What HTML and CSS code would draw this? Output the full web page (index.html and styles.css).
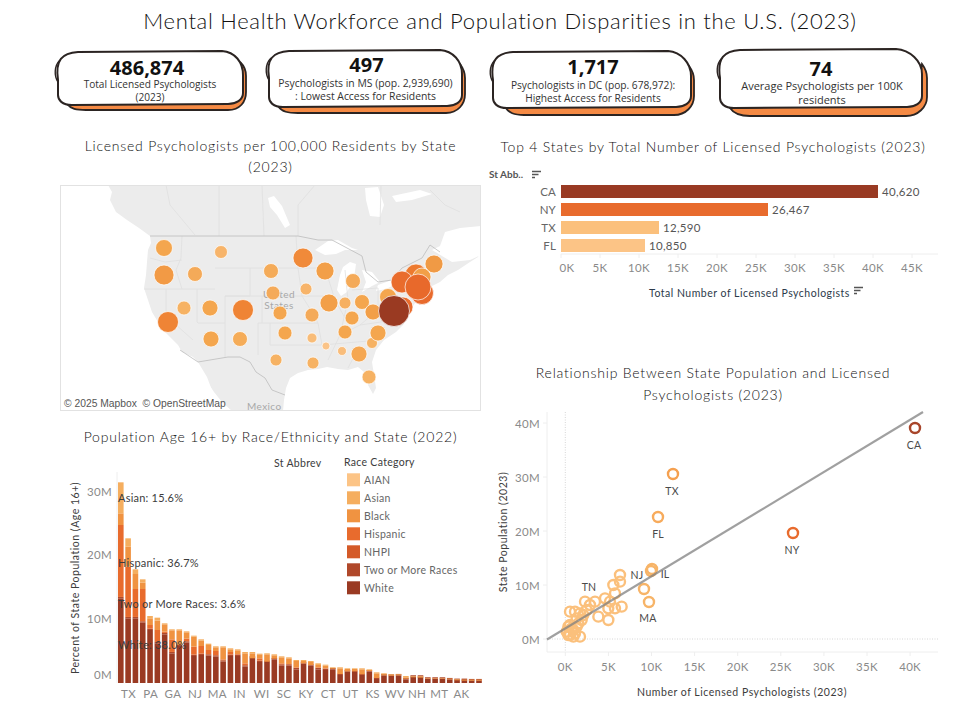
FILE: index.html
```html
<!DOCTYPE html>
<html lang="en">
<head>
<meta charset="utf-8">
<title>Mental Health Workforce and Population Disparities in the U.S. (2023)</title>
<link rel="stylesheet" href="styles.css">
</head>
<body>
<div class="page">
  <h1 class="title">Mental Health Workforce and Population Disparities in the U.S. (2023)</h1>

  <div class="kpis">
    <div class="kpi kpi-a">
      <svg class="kpi-shape" viewBox="55 48 192 72">
        <path class="kpi-back" d="M67 104C71 109 76 110 86 110L228 110C240 110 246 102 246 92L246 76C246 70 244 66 241 63L236 100Z"/>
        <path class="kpi-front" d="M58 80C55 60 62 53 78 52L222 51C235 52 243 62 243 75L243 93C243 100 236 104 228 104L72 105C62 105 58 100 58 95Z"/>
        <path class="kpi-tail" d="M58 82C54 76 54 66 60 60"/>
      </svg>
      <div class="kpi-num">486,874</div>
      <div class="kpi-sub">Total Licensed Psychologists<br>(2023)</div>
    </div>
    <div class="kpi kpi-b">
      <svg class="kpi-shape" viewBox="267 48 199 72">
        <path class="kpi-back" d="M278 106C282 112 288 113 298 113L446 113C458 113 465 104 465 94L465 78C465 72 463 68 460 64L455 102Z"/>
        <path class="kpi-front" d="M269 78C266 59 273 52 289 51L440 50C453 51 462 61 462 74L462 95C462 102 455 106 447 106L283 107C273 107 269 102 269 97Z"/>
        <path class="kpi-tail" d="M269 80C265 74 265 64 271 58"/>
      </svg>
      <div class="kpi-num">497</div>
      <div class="kpi-sub">Psychologists in MS (pop. 2,939,690)<br>: Lowest Access for Residents</div>
    </div>
    <div class="kpi kpi-c">
      <svg class="kpi-shape" viewBox="491 48 204 72">
        <path class="kpi-back" d="M505 107C509 113 514 115 524 115L674 115C686 115 694 106 694 96L694 80C694 74 692 70 689 66L684 104Z"/>
        <path class="kpi-front" d="M493 80C490 60 497 53 513 52L668 51C681 52 691 63 691 76L691 96C691 103 684 107 676 107L507 108C497 108 493 103 493 98Z"/>
        <path class="kpi-tail" d="M493 82C489 76 489 66 495 60"/>
      </svg>
      <div class="kpi-num">1,717</div>
      <div class="kpi-sub">Psychologists in DC (pop. 678,972):<br>Highest Access for Residents</div>
    </div>
    <div class="kpi kpi-d">
      <svg class="kpi-shape" viewBox="718 48 210 72">
        <path class="kpi-back" d="M730 108C734 114 740 116 750 116L906 116C918 116 927 107 927 97L927 78C927 72 925 68 922 64L917 104Z"/>
        <path class="kpi-front" d="M720 78C717 58 724 51 740 50L896 49C910 50 922 61 922 74L922 96C922 103 915 107 907 107L734 108C724 108 720 103 720 98Z"/>
        <path class="kpi-tail" d="M720 80C716 74 716 64 722 58"/>
      </svg>
      <div class="kpi-num">74</div>
      <div class="kpi-sub">Average Psychologists per 100K<br>residents</div>
    </div>
  </div>

  <div class="board">
    <section class="col col-left">
      <h2 class="chart-title title-map">Licensed Psychologists per 100,000 Residents by State<br>(2023)</h2>
      <svg class="chart map" id="map" viewBox="60 185 421 226">
        <rect class="water" x="60" y="185" width="421" height="226"/>
        <path class="land" d="M108 185L112 192 110 200 116 212 127 220 139 228 150 236 151 243 148 250 147 262 146 275 144 288 148 300 152 312 158 322 165 332 178 345 182 352 193 357 196 368 206 380 214 392 222 402 232 411 283 411 284 400 286 388 290 378 298 373 308 370 318 369 327 367 338 369 348 370 358 367 364 372 368 385 373 394 376 388 374 375 372 362 376 350 384 340 396 332 403 325 408 315 412 308 418 298 428 288 440 282 448 275 458 270 470 262 478 257 481 250 481 185Z"/>
        <path class="water" d="M193 357L198 362 207 377 213 393 217 398 210 393 203 383 195 370Z"/>
        <path class="water" d="M432 250L440 246 445 232 460 228 481 226 481 255 470 260 452 262Z"/>
        <path class="water" d="M315 250L328 241 338 240 352 248 358 250 345 250 336 254 325 255Z"/>
        <path class="water" d="M337 290L340 275 343 267 350 262 356 264 354 278 347 292 341 296Z"/>
        <path class="water" d="M362 270L372 272 380 282 372 286 362 292 366 282Z"/>
        <path class="water" d="M378 285L392 280 398 283 386 289 376 291Z"/>
        <path class="water" d="M365 188L378 187 384 205 380 217 370 216 366 200Z"/>
        <path class="water" d="M268 198L274 196 282 206 290 225 285 228 277 215 270 207Z"/>
        <path class="water" d="M392 196L420 190 432 194 412 200 396 202Z"/>
        <path class="water" d="M94 190L104 188 108 200 102 204Z"/>
        <path class="state" d="M150 258L165 262 182 260M182 236L181 258 176 270 182 289M144 289L215 289M166 289L166 316 193 340M197 289L197 322 198 323 225 323M215 268L250 268 250 296 225 296 225 323 225 357M225 296L262 296 262 323 258 323 258 355M250 268L296 268M262 296L312 296M262 323L318 323M296 236L298 268 302 296 312 312 318 323 322 345M270 323L270 345 290 345 322 345M296 268L325 268 335 300 345 318M312 296L335 296M345 270L348 300 340 335 328 360M352 290L378 288 378 310 360 325 340 335M360 325L395 320M322 345L380 340M360 345L348 368M378 310L400 305"/>
        <path class="state" d="M166 185L170 205 195 235M219 185L219 236M262 185L264 236M298 236L298 205 315 185M380 225L381 185M430 190L445 205 460 212"/>
        <path class="border" d="M150 236L298 236 318 240 332 240 362 256 366 272 378 282 392 280 402 268 422 258 430 245 440 252M180 350L198 362 228 357 240 357 250 362 256 372 265 378 272 390 285 395"/>
        <text class="map-place" x="279" y="298" text-anchor="middle">United</text>
        <text class="map-place" x="279" y="309" text-anchor="middle">States</text>
        <g id="map-dots"></g>
        <text class="map-place" x="247" y="410">Mexico</text>
        <text class="map-credit" x="64" y="407">© 2025 Mapbox  © OpenStreetMap</text>
      </svg>

      <h2 class="chart-title title-stack">Population Age 16+ by Race/Ethnicity and State (2022)</h2>
      <svg class="chart stack" id="stack" viewBox="60 447 424 257">
        <line class="axis" x1="117" y1="472" x2="117" y2="683"/>
        <g id="stack-bars"></g>
        <text class="axis-title axis-long" transform="translate(79 578) rotate(-90)" text-anchor="middle">Percent of State Population (Age 16+)</text>
        <text class="tick" x="112" y="496" text-anchor="end">30M</text>
        <text class="tick" x="112" y="559" text-anchor="end">20M</text>
        <text class="tick" x="112" y="623" text-anchor="end">10M</text>
        <text class="tick" x="112" y="679" text-anchor="end">0M</text>
        <text class="note" x="118" y="502">Asian: 15.6%</text>
        <text class="note" x="118" y="567">Hispanic: 36.7%</text>
        <text class="note" x="118" y="608">Two or More Races: 3.6%</text>
        <text class="note" x="118" y="649">White: 38.0%</text>
        <text class="axis-title" x="274" y="467">St Abbrev</text>
        <text class="axis-title" x="344" y="466">Race Category</text>
        <g id="legend"></g>
      </svg>
    </section>

    <section class="col col-right">
      <h2 class="chart-title title-top">Top 4 States by Total Number of Licensed Psychologists (2023)</h2>
      <svg class="chart bars" id="bars" viewBox="488 158 452 147">
        <text class="field" x="489" y="178">St Abb..</text>
        <path class="sort" d="M532 171.5H541M532 174.5H538.5M532 177.5H535"/>
        <line class="axis" x1="561" y1="254" x2="938" y2="254"/>
        <line class="axis" x1="561" y1="254" x2="561" y2="258"/>
        <g id="bar-rows"></g>
        <text class="field-title" x="649" y="297">Total Number of Licensed Psychologists</text>
        <path class="sort" d="M854 287.5H863M854 290.5H860.5M854 293.5H857"/>
      </svg>

      <h2 class="chart-title title-scatter">Relationship Between State Population and Licensed<br>Psychologists (2023)</h2>
      <svg class="chart scatter" id="scatter" viewBox="488 406 452 298">
        <line class="axis" x1="547" y1="412" x2="547" y2="652"/>
        <line class="axis" x1="547" y1="652" x2="938" y2="652"/>
        <line class="zero" x1="565.3" y1="412" x2="565.3" y2="652"/>
        <line class="zero" x1="547" y1="639" x2="938" y2="639"/>
        <g id="scatter-ticks"></g>
        <g id="scatter-dots"></g>
        <line class="trend" x1="547" y1="639.5" x2="923" y2="412"/>
        <text class="axis-title axis-long" transform="translate(507 532) rotate(-90)" text-anchor="middle">State Population (2023)</text>
        <text class="axis-title axis-long" x="742" y="696" text-anchor="middle">Number of Licensed Psychologists (2023)</text>
      </svg>
    </section>
  </div>
</div>
<script src="charts.js"></script>
</body>
</html>
```

FILE: styles.css
```css
* { box-sizing: border-box; }
html, body { margin: 0; padding: 0; background: #fff; }
body { font-family: "Lato", "Open Sans", sans-serif; color: #333; }
.page { width: 968px; height: 704px; overflow: hidden; display: flex; flex-direction: column; }

.title {
  margin: 7px 0 0 32px;
  height: 28px;
  line-height: 27px;
  font-size: 22px;
  font-weight: 300;
  text-align: center;
  letter-spacing: 0.7px;
  color: #111;
}

.kpis { display: flex; margin-top: 13px; height: 72px; padding-left: 55px; }
.kpi { position: relative; text-align: center; font-family: "Open Sans", sans-serif; }
.kpi-shape { position: absolute; left: 0; top: 0; width: 100%; height: 100%; overflow: visible; }
.kpi-front { fill: #fff; stroke: #2b2422; stroke-width: 2; }
.kpi-back { fill: #f58a44; stroke: #2b2422; stroke-width: 1.8; }
.kpi-tail { fill: none; stroke: #2b2422; stroke-width: 1.4; }
.kpi-num, .kpi-sub { position: relative; }
.kpi-num { font-size: 20px; font-weight: 700; line-height: 22px; color: #111; }
.kpi-sub { font-size: 10.2px; line-height: 13px; color: #333; }
.kpi-a { width: 192px; padding-top: 10px; }
.kpi-a .kpi-num { left: -4px; line-height: 20px; }
.kpi-a .kpi-sub { left: -1px; font-size: 10.1px; }
.kpi-b { width: 199px; margin-left: 20px; padding-top: 6px; }
.kpi-b .kpi-sub { margin-top: 1px; left: -1px; font-size: 10.4px; }
.kpi-c { width: 204px; margin-left: 25px; padding-top: 8px; }
.kpi-c .kpi-sub { margin-top: 1px; }
.kpi-d { width: 210px; margin-left: 23px; padding-top: 13px; }
.kpi-d .kpi-num { line-height: 16px; left: -2px; }
.kpi-d .kpi-sub { margin-top: 2px; left: -1px; font-size: 11px; line-height: 14px; }

.board { display: flex; margin-top: 15px; flex: 1; min-height: 0; }
.col { display: flex; flex-direction: column; }
.col-left { width: 424px; margin-left: 60px; }
.col-right { width: 452px; margin-left: 4px; }
.chart { display: block; flex: none; }
.chart-title {
  margin: 0;
  font-size: 14px;
  font-weight: 300;
  line-height: 21px;
  text-align: center;
  letter-spacing: 0.78px;
  color: #111;
}
.title-map { width: 421px; }
.map { width: 421px; height: 226px; margin-top: 8px; outline: 1px solid #e2e2e2; outline-offset: -1px; }
.title-stack { width: 421px; margin-top: 15px; }
.stack { width: 424px; height: 257px; }
.title-top { margin-top: 1px; width: 450px; }
.bars { width: 452px; height: 147px; margin-top: 1px; }
.title-scatter { margin-top: 57px; line-height: 22px; width: 450px; }
.scatter { width: 452px; height: 298px; }

.land { fill: #ececec; }
.water { fill: #fff; }
.state { fill: none; stroke: #e0e0e0; stroke-width: 0.8; }
.border { fill: none; stroke: #bcbcbc; stroke-width: 0.8; }
.map-place { font-size: 10px; fill: #a8a8a8; letter-spacing: 0.4px; }
.map-credit { font-size: 10.3px; fill: #555; white-space: pre; font-family: "Liberation Sans", sans-serif; }

.axis { stroke: #eee; stroke-width: 1; }
.zero { stroke: #d6d6d6; stroke-width: 1; stroke-dasharray: 1 1.5; }
.tick { font-size: 11.5px; fill: #8a8a8a; letter-spacing: 0.3px; }
.state-tick { font-size: 11.5px; fill: #666; letter-spacing: 0.2px; }
.value { font-size: 11.5px; fill: #555; letter-spacing: 0.3px; }
.note { font-size: 11px; fill: #3c3c3c; letter-spacing: 0.22px; }
.axis-title { font-size: 10.5px; fill: #3c3c3c; letter-spacing: 0.3px; }
.axis-long { letter-spacing: 0.52px; }
.field { font-size: 10px; font-weight: 700; fill: #555; }
.field-title { font-size: 10.5px; fill: #2c3a4a; letter-spacing: 0.5px; }
.legend-label { font-size: 10.5px; fill: #666; letter-spacing: 0.3px; }
.sort { fill: none; stroke: #555; stroke-width: 1.4; }
.point-label { font-size: 10.5px; fill: #4a4a4a; letter-spacing: 0.2px; }
.dot { stroke: #fff; stroke-width: 1; stroke-opacity: 0.7; }
.ring { fill: none; stroke-width: 2.4; }
.trend { stroke: #808080; stroke-width: 2.2; stroke-opacity: 0.75; }
```

FILE: charts.js
```js
var NS = "http://www.w3.org/2000/svg";
function add(parent, tag, attrs, text) {
  var el = document.createElementNS(NS, tag);
  for (var k in attrs) el.setAttribute(k, attrs[k]);
  if (text !== undefined) el.textContent = text;
  parent.appendChild(el);
  return el;
}

/* map dots: x, y, r, colour */
var dots = [
  [164,248,8.5,"#f4a64e"],[221,252,6.5,"#f7b46a"],[164,275,10,"#f29a45"],[195,274,7.5,"#f4aa59"],
  [184,308,7,"#f6b263"],[210,308,8,"#f4a64e"],[243,310,10.5,"#ef8435"],[168,322,10.5,"#ef8435"],
  [211,339,8,"#f4a64e"],[240,339,7.5,"#f5ac58"],[271,271,7.5,"#f4ab59"],[273,293,7,"#f4aa59"],
  [280,313,7,"#f4a64e"],[285,333,7,"#f4a64e"],[276,360,6,"#f6b263"],[303,258,10,"#f08a3a"],
  [325,271,9,"#f29f48"],[306,289,6,"#f7b46a"],[329,303,9,"#f29f48"],[312,315,7,"#f4aa59"],
  [312,338,5,"#f8bc78"],[313,363,6,"#f6b263"],[326,346,4,"#fbc488"],[342,351,4.5,"#f9bd7b"],
  [359,354,8,"#f5a752"],[369,377,7,"#f6b263"],[345,332,7,"#f4a64e"],[352,318,7,"#f4a64e"],
  [345,303,6,"#f6b061"],[353,281,7.5,"#f4aa59"],[362,302,7.5,"#f4a64e"],[372,343,5.5,"#f6b263"],
  [378,333,8,"#f4a64e"],[373,312,8,"#f29f48"],[388,297,8.5,"#f4a64e"],[403,307,10,"#e96c2d"],
  [434,264,9,"#f09a45"],[416,275,11,"#ed7a2f"],[422,277,9,"#f29f48"],[402,282,11,"#e96c2d"],
  [422,293,11.5,"#e86a2c"],[418,287,13,"#e8692b"],[394,311,15.5,"#9a3a22"]
];
var mapDots = document.getElementById("map-dots");
dots.forEach(function (d) {
  add(mapDots, "circle", { "class": "dot", cx: d[0], cy: d[1], r: d[2], fill: d[3] });
});

/* stacked bars: y of the top of each race group, read in 3x pixels above the chart's top */
var stackData = [
  [97,190,225,445],[265,290,350,505],[358,372,417,505],[388,398,417,518],[498,505,525,540],
  [503,512,540,580],[520,523,545,553],[538,541,568,610],[538,541,585,588],[544,547,566,578],
  [557,560,590,618],[568,572,588,615],[581,585,600,617],[589,592,603,620],[589,592,628,635],
  [595,598,606,618],[598,601,612,618],[606,610,640,650],[606,610,625,623],[611,613,625,636],
  [610,613,635,636],[613,616,626,628],[619,622,640,647],[622,625,642,647],[630,633,652,658],
  [630,633,640,641],[633,636,645,647],[640,645,652,658],[644,647,655,660],[652,654,656,658],
  [652,655,672,675],[655,657,664,664],[655,657,664,666],[655,658,673,675],[658,660,663,665],
  [667,670,684,687],[670,673,676,676],[673,675,677,677],[673,675,676,676],[678,682,686,688],
  [679,681,682,680],[679,681,683,680],[684,685,686,686],[685,686,687,686],[685,686,687,686],
  [686,687,688,688],[688,690,691,690],[689,690,692,690],[689,690,692,691],[689,690,692,691]
];
var COLORS = { aian:"#fcc486", asian:"#f5ae5f", black:"#f09341", hisp:"#e86b2d", nhpi:"#d45a28", two:"#b0482a", white:"#9a3a23" };
var stackBars = document.getElementById("stack-bars");
function py(v) { return 450 + v / 3; }
var BASE = 683;
stackData.forEach(function (b, i) {
  var x = 118 + i * 7.31, w = 5.6;
  var s = [
    [BASE, py(b[3]), COLORS.white],
    [py(b[3]), py(b[3]) - 1.4, COLORS.two],
    [py(b[3]) - 1.4, py(b[2]), COLORS.hisp],
    [py(b[2]), py(b[1]), COLORS.black],
    [py(b[1]), py(b[0]), COLORS.asian]
  ];
  s.forEach(function (p) {
    if (p[0] - p[1] > 0.1) add(stackBars, "rect", { x: x, y: p[1], width: w, height: p[0] - p[1], fill: p[2] });
  });
});
["TX","PA","GA","NJ","MA","IN","WI","SC","KY","CT","UT","KS","WV","NH","MT","AK"].forEach(function (t, i) {
  add(stackBars, "text", { "class": "tick", x: 128.5 + i * 22.2, y: 698, "text-anchor": "middle" }, t);
});

/* legend */
var legend = document.getElementById("legend");
[["AIAN",COLORS.aian],["Asian",COLORS.asian],["Black",COLORS.black],["Hispanic",COLORS.hisp],
 ["NHPI",COLORS.nhpi],["Two or More Races",COLORS.two],["White",COLORS.white]].forEach(function (l, i) {
  var y = 473.3 + i * 18;
  add(legend, "rect", { x: 347, y: y, width: 13, height: 13, fill: l[1] });
  add(legend, "text", { "class": "legend-label", x: 364, y: y + 10.5 }, l[0]);
});

/* top 4 bars */
var rows = document.getElementById("bar-rows");
[["CA",185,878,"#993a23","40,620"],["NY",203,768,"#e86b2d","26,467"],
 ["TX",221,659,"#fbc07c","12,590"],["FL",239,645,"#fcc486","10,850"]].forEach(function (r) {
  add(rows, "rect", { x: 561, y: r[1], width: r[2] - 561, height: 13, fill: r[3] });
  add(rows, "text", { "class": "state-tick", x: 556, y: r[1] + 10.5, "text-anchor": "end" }, r[0]);
  add(rows, "text", { "class": "value", x: r[2] + 4, y: r[1] + 10.5 }, r[4]);
});
["0K","5K","10K","15K","20K","25K","30K","35K","40K","45K"].forEach(function (t, i) {
  var cx = i === 0 ? 567 : 561 + i * 39;
  add(rows, "text", { "class": "tick", x: cx, y: 272, "text-anchor": "middle" }, t);
  if (i) add(rows, "line", { "class": "axis", x1: 561 + i * 39, y1: 254, x2: 561 + i * 39, y2: 258 });
});

/* scatter */
var st = document.getElementById("scatter-ticks");
["0K","5K","10K","15K","20K","25K","30K","35K","40K"].forEach(function (t, i) {
  var x = 565.3 + i * 43.1;
  add(st, "line", { "class": "axis", x1: x, y1: 652, x2: x, y2: 656 });
  add(st, "text", { "class": "tick", x: x, y: 671, "text-anchor": "middle" }, t);
});
["0M","10M","20M","30M","40M"].forEach(function (t, i) {
  var y = 639 - i * 54;
  add(st, "line", { "class": "axis", x1: 543, y1: y, x2: 547, y2: y });
  add(st, "text", { "class": "tick", x: 540, y: y + 5, "text-anchor": "end" }, t);
});
var sd = document.getElementById("scatter-dots");
var cluster = [[90,155],[105,155],[120,160],[135,125],[165,125],[195,115],[220,75],[240,45],[240,65],[225,100],[210,125],[245,140],[225,145],[205,145],[175,170],[205,180],[125,180],[90,195],[100,210],[110,200],[90,225],[100,230],[120,230],[80,215],[130,165],[115,190],[95,205],[85,200],[105,220],[85,225],[140,150],[110,175],[150,135]];
cluster.forEach(function (p) {
  add(sd, "circle", { "class": "ring", cx: 540 + p[0] / 3, cy: 560 + p[1] / 3, r: 5, stroke: "#fbc07c" });
});
[[673,474,"#f5a04f"],[658,517,"#f7ab5c"],[793,533,"#e86b2d"],[915,428,"#a8452a"],[652,569,"#f7b468"],[651,571,"#f7b468"],[649,602,"#f7b468"],[644,589,"#f7b468"]].forEach(function (p) {
  add(sd, "circle", { "class": "ring", cx: p[0], cy: p[1], r: 5, stroke: p[2] });
});
[["TX",672,495],["FL",658,538],["NY",792,554],["CA",914,449],["TN",589,591],["NJ",637,579],["IL",665,578],["MA",648,622]].forEach(function (l) {
  add(sd, "text", { "class": "point-label", x: l[1], y: l[2], "text-anchor": "middle" }, l[0]);
});
```
